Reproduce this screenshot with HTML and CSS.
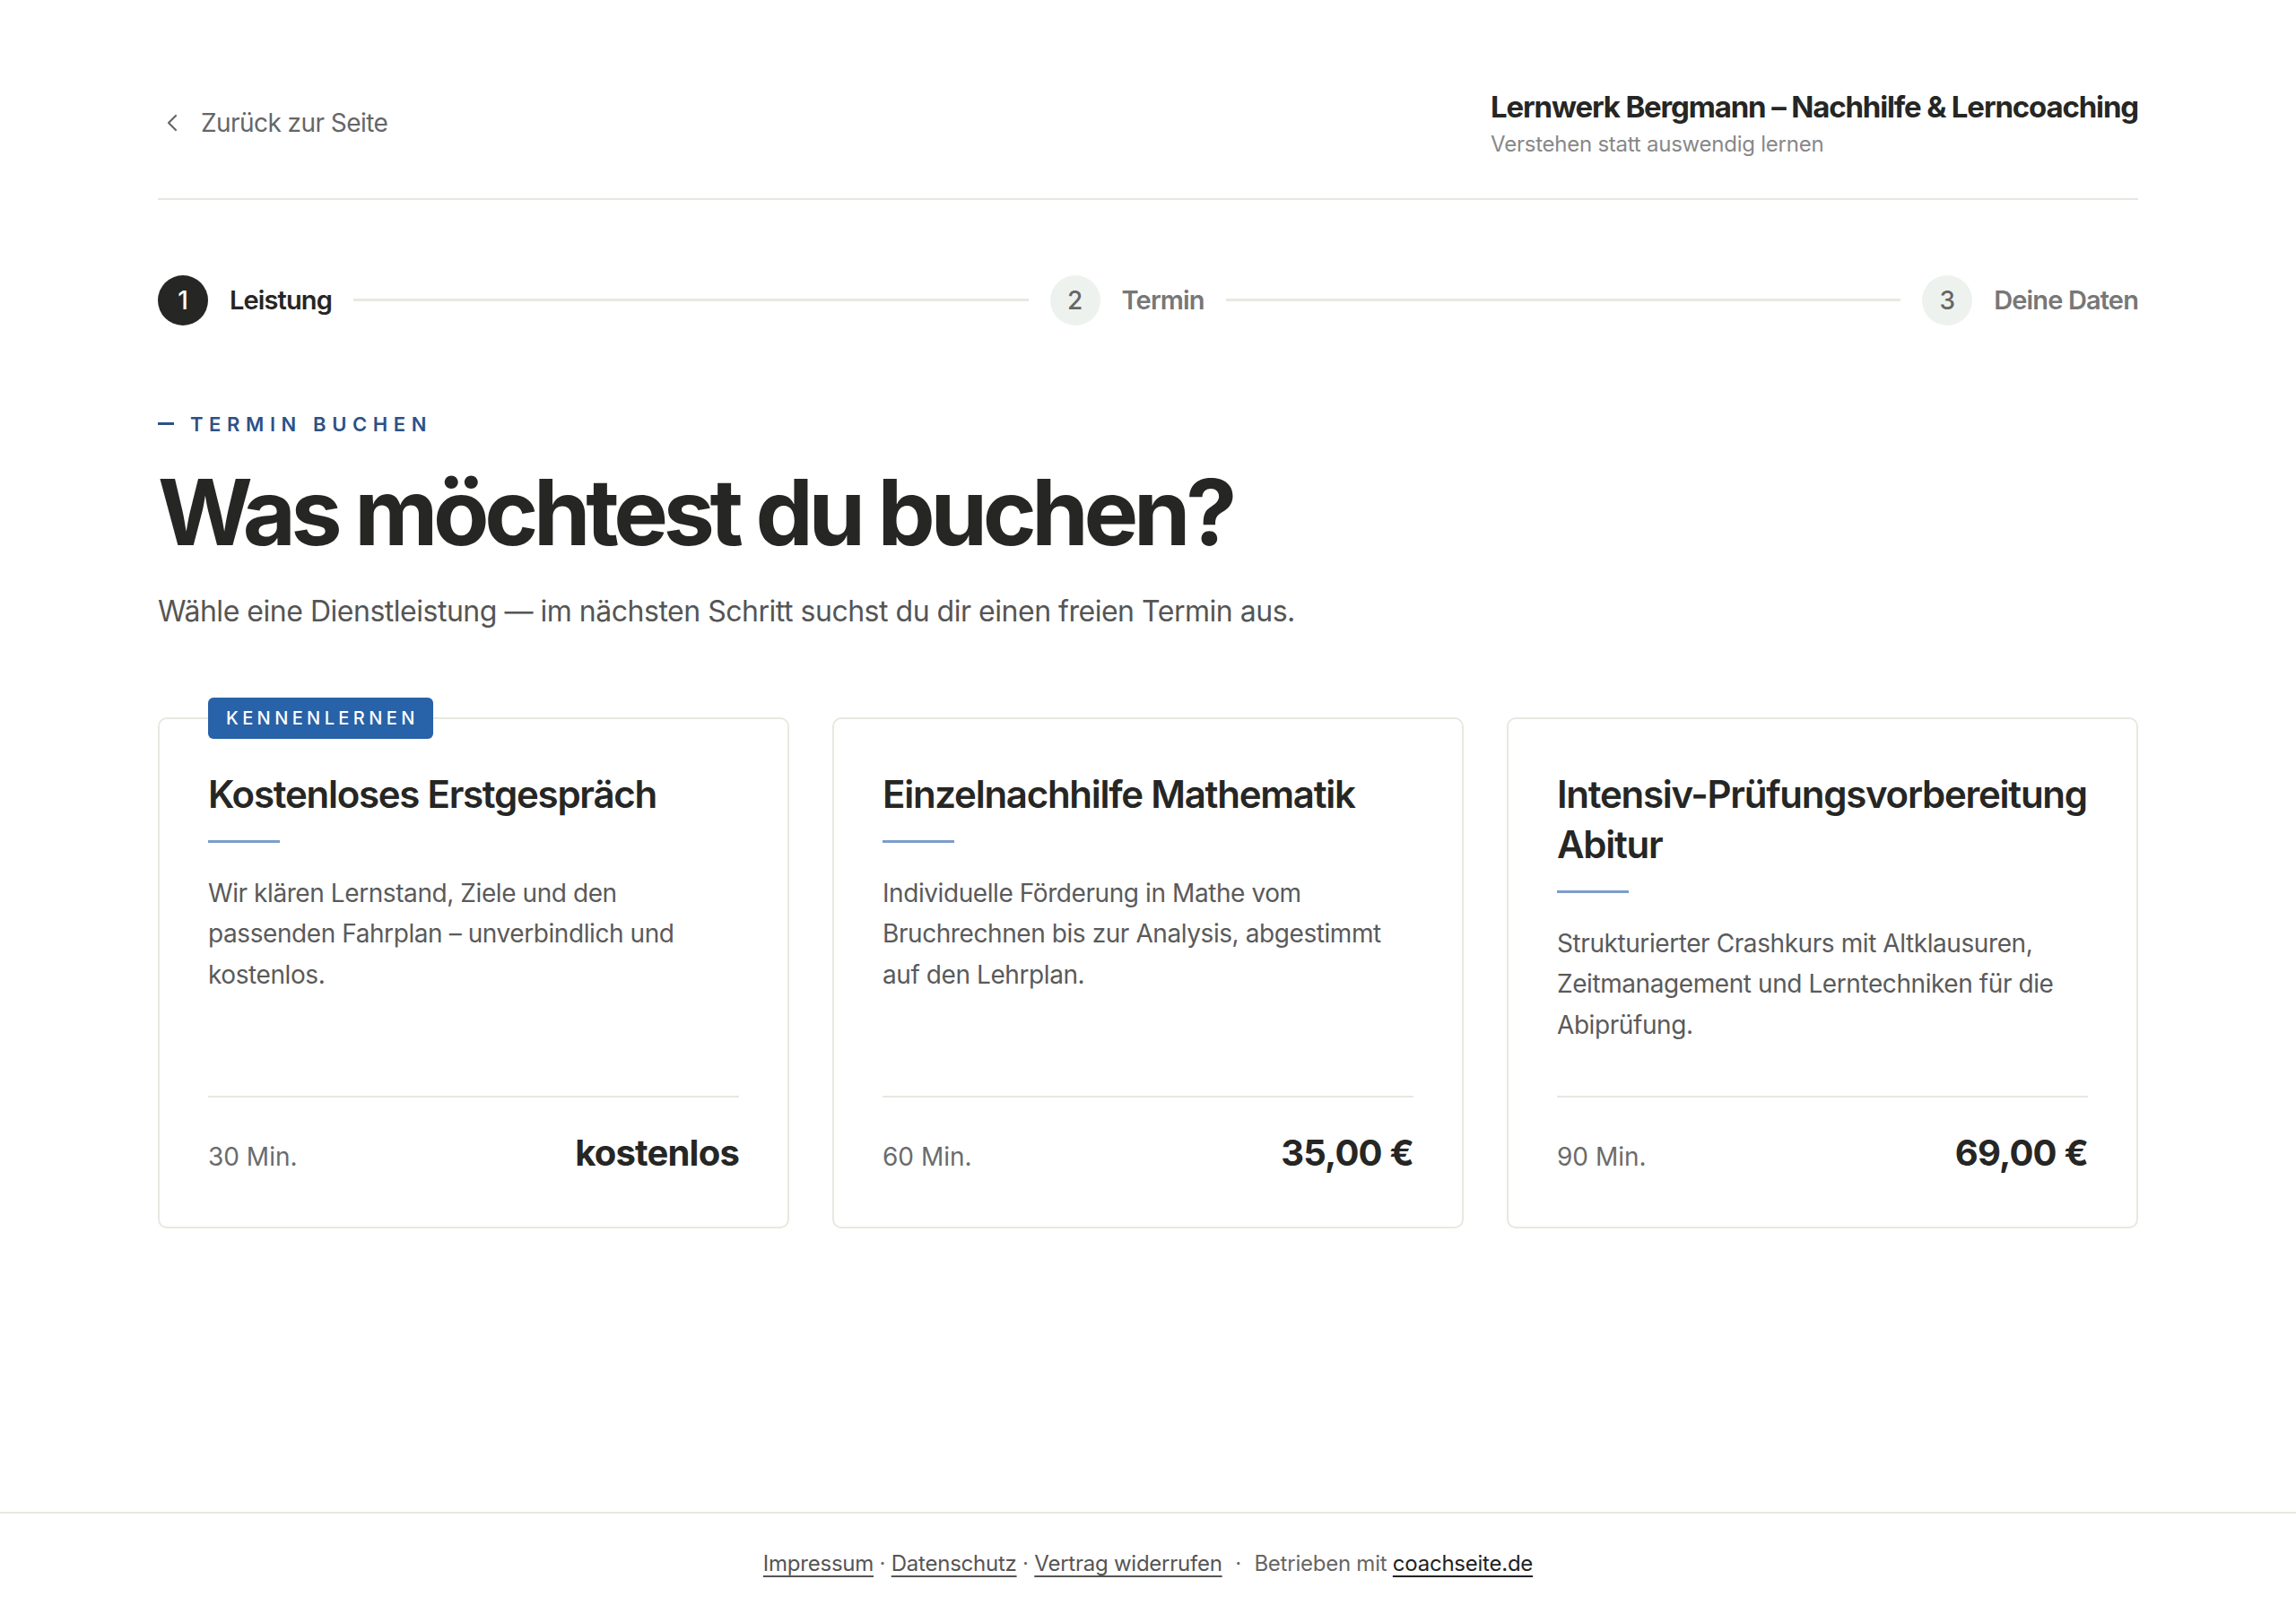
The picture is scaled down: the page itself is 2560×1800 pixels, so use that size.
FILE: index.html
```html
<!DOCTYPE html>
<html lang="de">

<head>
    <meta charset="UTF-8">
    <meta name="viewport" content="width=device-width, initial-scale=1.0">
    <title>Termin buchen – Lernwerk Bergmann</title>
    <link rel="stylesheet" href="styles.css">
</head>

<body>
    <div class="page">
        <header class="top">
            <a class="back" href="#">
                <svg viewBox="0 0 24 24" fill="none" stroke="currentColor" stroke-width="1.6" stroke-linecap="round" stroke-linejoin="round"><path d="M15 6l-6 6 6 6"/></svg>
                Zurück zur Seite
            </a>
            <div class="brand">
                <div class="brand-name">Lernwerk Bergmann – Nachhilfe &amp; Lerncoaching</div>
                <div class="brand-tag">Verstehen statt auswendig lernen</div>
            </div>
        </header>

        <ol class="steps">
            <li class="step active"><span class="num">1</span><span>Leistung</span></li>
            <li class="line"></li>
            <li class="step"><span class="num">2</span><span>Termin</span></li>
            <li class="line"></li>
            <li class="step"><span class="num">3</span><span>Deine Daten</span></li>
        </ol>

        <section class="intro">
            <div class="eyebrow">TERMIN BUCHEN</div>
            <h1>Was möchtest du buchen?</h1>
            <p class="lead">Wähle eine Dienstleistung — im nächsten Schritt suchst du dir einen freien Termin aus.</p>
        </section>

        <div class="services">
            <a class="card" href="#">
                <span class="badge">KENNENLERNEN</span>
                <h2>Kostenloses Erstgespräch</h2>
                <div class="accent"></div>
                <p>Wir klären Lernstand, Ziele und den passenden Fahrplan – unverbindlich und kostenlos.</p>
                <div class="meta">
                    <span class="dur">30 Min.</span>
                    <span class="price">kostenlos</span>
                </div>
            </a>
            <a class="card" href="#">
                <h2>Einzelnachhilfe Mathematik</h2>
                <div class="accent"></div>
                <p>Individuelle Förderung in Mathe vom Bruchrechnen bis zur Analysis, abgestimmt auf den Lehrplan.</p>
                <div class="meta">
                    <span class="dur">60 Min.</span>
                    <span class="price">35,00 €</span>
                </div>
            </a>
            <a class="card" href="#">
                <h2>Intensiv-Prüfungsvorbereitung Abitur</h2>
                <div class="accent"></div>
                <p>Strukturierter Crashkurs mit Altklausuren, Zeitmanagement und Lerntechniken für die Abiprüfung.</p>
                <div class="meta">
                    <span class="dur">90 Min.</span>
                    <span class="price">69,00 €</span>
                </div>
            </a>
        </div>
    </div>

    <footer class="foot">
        <a href="#">Impressum</a> · <a href="#">Datenschutz</a> · <a href="#">Vertrag widerrufen</a>
        <span class="sep">·</span>
        Betrieben mit <a class="brand-link" href="#">coachseite.de</a>
    </footer>
</body>

</html>
```

FILE: styles.css
```css
* {
    box-sizing: border-box;
}

body {
    margin: 0;
    min-height: 100vh;
    display: flex;
    flex-direction: column;
    font-family: Inter, "Noto Sans", sans-serif;
    color: #262624;
    background: #fff;
}

a {
    color: inherit;
    text-decoration: none;
}

.page {
    width: 2208px;
    margin: 0 auto;
    flex: 1;
}

/* header */
.top {
    display: flex;
    justify-content: space-between;
    align-items: center;
    padding: 100px 0 46px;
    border-bottom: 2px solid #e8e6e0;
}

.back {
    display: flex;
    align-items: center;
    gap: 16px;
    font-size: 28px;
    color: #666;
    letter-spacing: -0.02em;
}

.back svg {
    width: 32px;
    height: 32px;
}

.brand-name {
    font-size: 33px;
    font-weight: 700;
    line-height: 1.2;
    letter-spacing: -0.035em;
}

.brand-tag {
    margin-top: 6px;
    font-size: 24px;
    color: #888;
    letter-spacing: -0.01em;
}

/* steps */
.steps {
    list-style: none;
    margin: 84px 0 0;
    padding: 0;
    display: flex;
    align-items: center;
    gap: 24px;
}

.step {
    display: flex;
    align-items: center;
    gap: 24px;
    font-size: 29px;
    font-weight: 600;
    letter-spacing: -0.03em;
    color: #777;
}

.num {
    width: 56px;
    height: 56px;
    border-radius: 50%;
    display: flex;
    align-items: center;
    justify-content: center;
    background: #eef2ee;
    color: #666;
    font-size: 28px;
    font-weight: 500;
    letter-spacing: 0;
}

.step.active {
    color: #262624;
}

.step.active .num {
    background: #262624;
    color: #fff;
}

.line {
    flex: 1;
    height: 3px;
    background: #e9e8e0;
}

/* intro */
.intro {
    margin-top: 97px;
}

.eyebrow {
    display: flex;
    align-items: center;
    gap: 18px;
    font-size: 22px;
    font-weight: 600;
    letter-spacing: 0.3em;
    color: #2c5287;
}

.eyebrow::before {
    content: "";
    width: 18px;
    height: 3px;
    background: currentColor;
}

h1 {
    margin: 26px 0 0;
    font-size: 102px;
    font-weight: 700;
    line-height: 119px;
    letter-spacing: -0.052em;
}

.lead {
    margin: 27px 0 0;
    font-size: 32px;
    line-height: 1.5;
    color: #555;
    letter-spacing: -0.015em;
}

/* service cards */
.services {
    margin-top: 94px;
    display: grid;
    grid-template-columns: repeat(3, 1fr);
    gap: 48px;
}

.card {
    position: relative;
    display: flex;
    flex-direction: column;
    padding: 56px 54px 58px;
    border: 2px solid #e9e7e0;
    border-radius: 10px;
}

.badge {
    position: absolute;
    top: -24px;
    left: 54px;
    height: 46px;
    padding: 0 16px 0 20px;
    display: flex;
    align-items: center;
    border-radius: 6px;
    background: #2862a8;
    color: #fff;
    font-size: 20px;
    font-weight: 500;
    letter-spacing: 0.22em;
}

.card h2 {
    margin: 0;
    font-size: 42px;
    line-height: 56px;
    font-weight: 600;
    letter-spacing: -0.03em;
}

.accent {
    width: 80px;
    height: 3px;
    margin-top: 23px;
    background: #7d9dca;
}

.card p {
    flex: 1;
    margin: 34px 0 0;
    font-size: 28px;
    line-height: 1.63;
    color: #5a5a5a;
    letter-spacing: -0.015em;
}

.meta {
    margin-top: 56px;
    padding-top: 37px;
    border-top: 2px solid #e9e7e0;
    display: flex;
    justify-content: space-between;
    align-items: baseline;
}

.dur {
    font-size: 28px;
    color: #6b6b6b;
}

.price {
    font-size: 40px;
    font-weight: 700;
    letter-spacing: -0.02em;
}

/* footer */
.foot {
    border-top: 2px solid #e9e7e0;
    padding: 41px 0 42px;
    text-align: center;
    font-size: 24px;
    color: #666;
    letter-spacing: -0.01em;
}

.foot a {
    color: #555;
    text-decoration: underline;
    text-underline-offset: 5px;
}

.foot .sep {
    margin: 0 8px;
}

.foot .brand-link {
    color: #222;
}
```
